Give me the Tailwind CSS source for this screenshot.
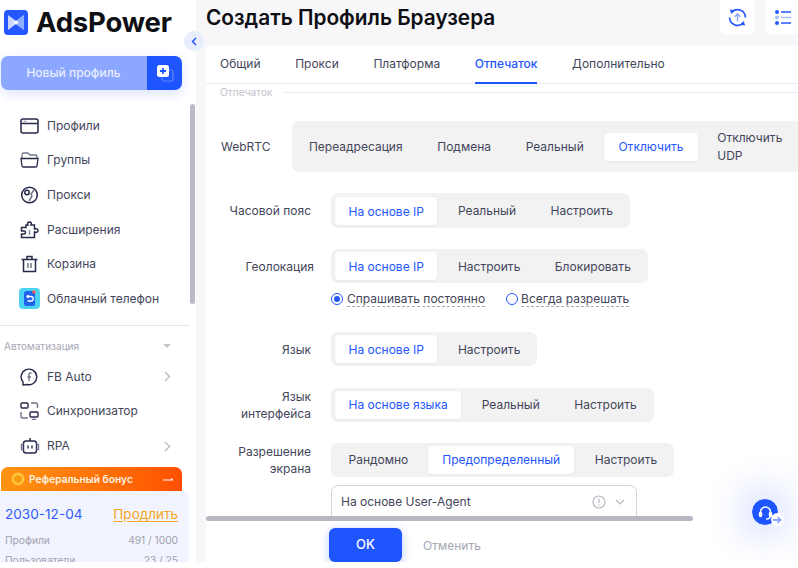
<!DOCTYPE html>
<html lang="ru">
<head>
  <meta charset="UTF-8" />
  <title>AdsPower</title>
  <script src="https://cdn.jsdelivr.net/npm/@tailwindcss/browser@4"></script>
</head>
<body class="bg-white [font-family:Inter,sans-serif] text-[12px] text-[#43465a] overflow-hidden">
<div class="relative flex w-[798px] h-[562px] overflow-hidden bg-[#f7f7f9]">

  <!-- Sidebar -->
  <aside class="relative w-[196px] h-full bg-white shrink-0 flex flex-col overflow-hidden">
    <div class="flex pl-[4px] pt-[10px] h-[46px] shrink-0 items-start">
      <svg class="w-[24px] h-[25px] shrink-0" viewBox="0 0 24 25">
        <rect width="24" height="25" rx="4" fill="#2457ff"/>
        <path d="M4 5l8 6 8-6v15l-8-6-8 6z" fill="#c9d7ff"/>
        <path d="M12 11l8-6v15l-8-6z" fill="#8fadff"/>
        <path d="M9 12.500l3-2 3 2-3 2z" fill="#fff"/>
      </svg>
      <span class="ml-[8px] mt-[-1px] text-[27.500px] leading-[27px] font-bold text-[#0e0f14] tracking-[-0.2px]">AdsPower</span>
    </div>

    <div class="ml-[1px] mt-[10px] w-[181px] h-[34px] flex rounded-[7px] overflow-hidden shrink-0 shadow-[0_4px_12px_rgba(60,100,255,0.18)]">
      <div class="flex-1 bg-[#8ca7ff] text-[#e9eeff] flex items-center justify-center font-medium pr-[1px]">Новый профиль</div>
      <div class="w-[35px] bg-[#1f55ff] flex items-center justify-center">
        <svg class="w-[18px] h-[18px]" viewBox="0 0 18 18">
          <rect x="6" y="6" width="11" height="11" rx="2" fill="none" stroke="#5f86ff" stroke-width="1.200"/>
          <rect x="1" y="1" width="12" height="12" rx="2.500" fill="#fff"/>
          <path d="M7 4v6M4 7h6" stroke="#1f55ff" stroke-width="1.800"/>
        </svg>
      </div>
    </div>

    <nav class="mt-[18.500px] flex flex-col shrink-0">
      <div class="h-[34.600px] pl-[20px] flex items-center">
        <svg class="w-[19px] h-[16px] mr-[8px]" viewBox="0 0 19 16" fill="none" stroke="#262a4a" stroke-width="1.500"><rect x="1" y="1" width="17" height="14" rx="2"/><path d="M1 5.500h17"/><path d="M3.500 3.300h3" stroke="#8b8da0" stroke-width="1"/></svg>
        Профили
      </div>
      <div class="h-[34.600px] pl-[20px] flex items-center">
        <svg class="w-[19px] h-[16px] mr-[8px]" viewBox="0 0 19 16" fill="none" stroke="#262a4a" stroke-width="1.300"><path d="M2 6V2.500C2 1.700 2.600 1 3.500 1H8l2 2h5.500C16.300 3 17 3.700 17 4.500V6" stroke="#71748a"/><path d="M1 6.500h17l-1 7.500c-.1.600-.6 1-1.200 1H3.200c-.6 0-1.100-.4-1.200-1z"/></svg>
        Группы
      </div>
      <div class="h-[34.600px] pl-[20px] flex items-center">
        <svg class="w-[19px] h-[18px] mr-[8px]" viewBox="0 0 19 18" fill="none" stroke="#262a4a" stroke-width="1.500"><circle cx="9.500" cy="9" r="7.800"/><circle cx="7" cy="6.500" r="2.200"/><path d="M14 4l-3 4 1 2-3 5" stroke="#71748a"/></svg>
        Прокси
      </div>
      <div class="h-[34.600px] pl-[20px] flex items-center">
        <svg class="w-[19px] h-[18px] mr-[8px]" viewBox="0 0 19 18" fill="none" stroke="#262a4a" stroke-width="1.500"><path d="M6 4h2c-1-2 0-3 1.500-3S12 2 11 4h3.500v4c2-.8 3.500 0 3.500 1.500S16.500 12 14.500 11v5.500H1.500V13H4c1 0 1.500-.8 1.500-1.500S5 10 4 10H1.500V6.500H6z"/><path d="M9.500 9v5" stroke="#8b8da0"/></svg>
        Расширения
      </div>
      <div class="h-[34.600px] pl-[20px] flex items-center">
        <svg class="w-[19px] h-[18px] mr-[8px]" viewBox="0 0 19 18" fill="none" stroke="#262a4a" stroke-width="1.500"><path d="M1.500 4.500h16M7 4.500V1.500h5v3M3.500 4.500V16.500h12V4.500"/><path d="M8 8v5M11 8v5" stroke="#71748a"/></svg>
        Корзина
      </div>
      <div class="h-[34.600px] pl-[19px] flex items-center">
        <svg class="w-[21px] h-[21px] mr-[7px]" viewBox="0 0 21 21"><rect width="21" height="21" rx="4" fill="#4cd3f2"/><rect x="5" y="3" width="11" height="15" rx="2.500" fill="#1f62ee"/><circle cx="15" cy="4" r="1.800" fill="#f0624d"/><path d="M8 8.500h4a2 2 0 0 1 0 4.500H8.500M9.500 7L8 8.500 9.500 10" fill="none" stroke="#fff" stroke-width="1.300"/></svg>
        Облачный телефон
      </div>
    </nav>

    <div class="mt-[8.500px] w-[190px] border-t border-[#e6e7ec] shrink-0"></div>
    <div class="mt-[14px] pl-[4px] pr-[25px] flex items-center justify-between text-[10px] leading-[13px] text-[#a6a8b5] shrink-0">
      Автоматизация
      <span class="w-0 h-0 border-x-[4px] border-x-transparent border-t-[4px] border-t-[#c3c4cc]"></span>
    </div>

    <div class="mt-[7px] flex flex-col shrink-0">
      <div class="h-[34.600px] pl-[20px] pr-[25px] flex items-center">
        <svg class="w-[19px] h-[18px] mr-[8px]" viewBox="0 0 19 18" fill="none" stroke="#262a4a" stroke-width="1.400"><path d="M3 14A7.800 7.800 0 1 1 7 16.500L3 17z"/><path d="M11.500 5h-1c-1 0-1.500.6-1.500 1.500V13M7.500 9H11" stroke="#71748a"/></svg>
        <span class="flex-1">FB Auto</span>
        <svg class="w-[7px] h-[11px]" viewBox="0 0 7 11" fill="none" stroke="#b9bac3" stroke-width="1.400"><path d="M1 1l4.500 4.500L1 10"/></svg>
      </div>
      <div class="h-[34.600px] pl-[20px] flex items-center">
        <svg class="w-[19px] h-[18px] mr-[8px]" viewBox="0 0 19 18" fill="none" stroke="#262a4a" stroke-width="1.400"><rect x="1" y="1" width="7" height="5" rx="1"/><rect x="10" y="10" width="8" height="5" rx="1"/><path d="M11 1h5a1.500 1.500 0 0 1 1.500 1.500V6M8 16H2.500A1.500 1.500 0 0 1 1 14.500V10M12 17.500h4" stroke="#71748a"/></svg>
        Синхронизатор
      </div>
      <div class="h-[34.600px] pl-[20px] pr-[25px] flex items-center">
        <svg class="w-[20px] h-[18px] mr-[7px]" viewBox="0 0 20 18" fill="none" stroke="#262a4a" stroke-width="1.400"><rect x="3.500" y="4" width="13" height="12" rx="2.500"/><path d="M10 1v3M8 8.500v3M12 8.500v3"/><path d="M3.500 7.500H1.500v5h2M16.500 7.500h2v5h-2" stroke="#71748a"/></svg>
        <span class="flex-1">RPA</span>
        <svg class="w-[7px] h-[11px]" viewBox="0 0 7 11" fill="none" stroke="#b9bac3" stroke-width="1.400"><path d="M1 1l4.500 4.500L1 10"/></svg>
      </div>
    </div>

    <div class="mt-[4px] ml-[1px] w-[181px] h-[24px] rounded-t-[7px] bg-gradient-to-r from-[#ff9411] to-[#ff4f00] flex items-center pl-[10px] pr-[9px] shrink-0">
      <svg class="w-[14px] h-[14px] mr-[4px]" viewBox="0 0 14 14"><circle cx="7" cy="7" r="6.500" fill="#ffc53d"/><circle cx="7" cy="7" r="3.800" fill="#f79a0e"/></svg>
      <span class="flex-1 text-[10.200px] font-semibold text-[#fff3e3]">Реферальный бонус</span>
      <svg class="w-[10px] h-[5px]" viewBox="0 0 10 5"><path d="M0 3.500h10V2.500L8 1v1.500H0z" fill="#fff"/></svg>
    </div>
    <div class="w-[189px] flex-1 bg-[#f1f4fe] rounded-tr-[7px] pl-[5px] pr-[11px] shrink-0">
      <div class="mt-[14px] flex justify-between items-center h-[18px]">
        <span class="text-[13.600px] text-[#2f5bff]">2030-12-04</span>
        <span class="text-[13.500px] text-[#f5a623] underline underline-offset-2">Продлить</span>
      </div>
      <div class="mt-[8px] flex justify-between text-[10.200px] leading-[19px] text-[#a0a2ae]"><span>Профили</span><span>491 / 1000</span></div>
      <div class="flex justify-between text-[10.200px] leading-[20px] text-[#a0a2ae]"><span>Пользователи</span><span>23 / 25</span></div>
    </div>

    <div class="absolute left-[190px] top-[104px] w-[5px] h-[200px] rounded-full bg-[#b9bbc6]"></div>
  </aside>

  <!-- Collapse button -->
  <div class="absolute left-[184px] top-[31px] w-[20px] h-[20px] rounded-full bg-[#e9eeff] flex items-center justify-center">
    <svg class="w-[6px] h-[9px]" viewBox="0 0 6 9" fill="none" stroke="#2457ff" stroke-width="1.500"><path d="M5 1L1.500 4.500 5 8"/></svg>
  </div>

  <!-- Main -->
  <main class="ml-[10px] flex-1 min-w-0 flex flex-col">
    <header class="h-[45px] shrink-0 flex justify-between items-start">
      <h1 class="mt-[5px] text-[20.800px] leading-[26px] font-semibold text-[#0e0f14]">Создать Профиль Браузера</h1>
      <div class="flex gap-[10px] -mr-[2px]">
        <div class="w-[35px] h-[35px] bg-white rounded-b-[7px] flex items-center justify-center">
          <svg class="w-[19px] h-[19px]" viewBox="0 0 19 19" fill="none" stroke="#2457ff" stroke-width="1.700">
            <path d="M17.400 9.500A7.900 7.900 0 0 0 4.200 3.700"/>
            <path d="M1.600 9.500A7.900 7.900 0 0 0 14.800 15.300"/>
            <path d="M1.800 1.600l5.200.6-3.600 3.800z" fill="#2457ff" stroke="none"/>
            <path d="M17.200 17.400l-5.200-.6 3.600-3.800z" fill="#2457ff" stroke="none"/>
            <path d="M9.500 13.500V6M6.700 8.700l2.800-2.800 2.800 2.800" stroke="#8ca7ff" stroke-width="1.500"/>
          </svg>
        </div>
        <div class="w-[35px] h-[35px] bg-white rounded-b-[7px] flex items-center justify-center">
          <svg class="w-[16px] h-[15px]" viewBox="0 0 16 15"><circle cx="2" cy="2" r="2" fill="#2457ff"/><circle cx="2" cy="7.500" r="2" fill="#a9bdff"/><circle cx="2" cy="13" r="2" fill="#2457ff"/><path d="M6 2h10M6 13h10" stroke="#2457ff" stroke-width="1.500"/><path d="M6 7.500h10" stroke="#a9bdff" stroke-width="1.500"/></svg>
        </div>
      </div>
    </header>

    <section class="flex-1 min-h-0 bg-white rounded-tl-[7px] flex flex-col overflow-hidden">
      <div class="h-[39px] shrink-0 flex border-b border-[#eaebef] pl-[14px] gap-[34.600px] leading-[38px]">
        <span>Общий</span>
        <span>Прокси</span>
        <span>Платформа</span>
        <span class="relative text-[#2457ff] font-medium">Отпечаток<span class="absolute left-0 right-0 bottom-[-1px] h-[2px] bg-[#1f55ff]"></span></span>
        <span>Дополнительно</span>
      </div>

      <div class="relative flex-1 min-h-0 overflow-hidden">
        <div class="mt-[1px] pl-[14px] flex items-center text-[10.200px] leading-[14px] text-[#c2c4cc]">
          <span>Отпечаток</span>
          <span class="ml-[11px] flex-1 border-t border-[#e9eaee]"></span>
        </div>

        <!-- WebRTC -->
        <div class="mt-[22px] flex items-center">
          <span class="ml-[15px] w-[50px] text-right">WebRTC</span>
          <div class="ml-[21.500px] w-[510px] h-[51px] rounded-[7px] bg-[#f2f2f3] flex items-center pl-[3px] gap-[6.700px] shrink-0">
            <span class="px-[14px]">Переадресация</span>
            <span class="px-[14px]">Подмена</span>
            <span class="px-[14px]">Реальный</span>
            <span class="h-[28px] px-[14px] leading-[28px] bg-white text-[#2457ff] rounded-[4px] shadow-[0_1px_3px_rgba(0,0,0,0.05)]">Отключить</span>
            <span class="pl-[13px] leading-[18px] w-[90px]">Отключить UDP</span>
          </div>
        </div>

        <!-- Часовой пояс -->
        <div class="mt-[21px] flex items-center">
          <span class="w-[105px] text-right pt-[1px]">Часовой пояс</span>
          <div class="ml-[20px] h-[35px] rounded-[7px] bg-[#f2f2f3] flex items-center pl-[4px] pr-[3px] gap-[6.500px]">
            <span class="h-[28px] px-[13.500px] leading-[29px] bg-white text-[#2457ff] rounded-[4px] shadow-[0_1px_3px_rgba(0,0,0,0.05)]">На основе IP</span>
            <span class="px-[14px] pt-[1px]">Реальный</span>
            <span class="px-[14px] pt-[1px]">Настроить</span>
          </div>
        </div>

        <!-- Геолокация -->
        <div class="mt-[21px] flex items-center">
          <span class="w-[108px] text-right pt-[1px]">Геолокация</span>
          <div class="ml-[17px] h-[34px] rounded-[7px] bg-[#f2f2f3] flex items-center pl-[4px] pr-[3px] gap-[6.500px]">
            <span class="h-[28px] px-[13.500px] leading-[29px] bg-white text-[#2457ff] rounded-[4px] shadow-[0_1px_3px_rgba(0,0,0,0.05)]">На основе IP</span>
            <span class="px-[14px] pt-[1px]">Настроить</span>
            <span class="px-[14px] pt-[1px]">Блокировать</span>
          </div>
        </div>
        <div class="mt-[8px] ml-[125px] h-[16px] flex items-center">
          <span class="w-[12px] h-[12px] rounded-full border-[1.500px] border-[#2457ff] flex items-center justify-center"><span class="w-[6px] h-[6px] rounded-full bg-[#2457ff]"></span></span>
          <span class="ml-[4px] leading-[15px] border-b border-dashed border-[#a6a8b5]">Спрашивать постоянно</span>
          <span class="ml-[21px] w-[12px] h-[12px] rounded-full border-[1.500px] border-[#2457ff]"></span>
          <span class="ml-[3px] leading-[15px] border-b border-dashed border-[#a6a8b5]">Всегда разрешать</span>
        </div>

        <!-- Язык -->
        <div class="mt-[25px] flex items-center">
          <span class="w-[105px] text-right pt-[1px]">Язык</span>
          <div class="ml-[20px] h-[34px] rounded-[7px] bg-[#f2f2f3] flex items-center pl-[4px] pr-[3px] gap-[6.500px]">
            <span class="h-[28px] px-[13.500px] leading-[29px] bg-white text-[#2457ff] rounded-[4px] shadow-[0_1px_3px_rgba(0,0,0,0.05)]">На основе IP</span>
            <span class="px-[14px] pt-[1px]">Настроить</span>
          </div>
        </div>

        <!-- Язык интерфейса -->
        <div class="mt-[22px] flex items-center">
          <span class="w-[105px] text-right leading-[17px]">Язык<br>интерфейса</span>
          <div class="ml-[20px] h-[34px] rounded-[7px] bg-[#f2f2f3] flex items-center pl-[4px] pr-[3px] gap-[6.500px]">
            <span class="h-[28px] px-[13.500px] leading-[28px] bg-white text-[#2457ff] rounded-[4px] shadow-[0_1px_3px_rgba(0,0,0,0.05)]">На основе языка</span>
            <span class="px-[14px]">Реальный</span>
            <span class="px-[14px]">Настроить</span>
          </div>
        </div>

        <!-- Разрешение экрана -->
        <div class="mt-[21px] flex items-center">
          <span class="w-[105px] text-right leading-[17px]">Разрешение<br>экрана</span>
          <div class="ml-[20px] h-[34px] rounded-[7px] bg-[#f2f2f3] flex items-center pl-[4px] pr-[3px] gap-[6.500px]">
            <span class="px-[13.500px]">Рандомно</span>
            <span class="h-[28px] px-[14px] leading-[28px] bg-white text-[#2457ff] rounded-[4px] shadow-[0_1px_3px_rgba(0,0,0,0.05)]">Предопределенный</span>
            <span class="px-[14px]">Настроить</span>
          </div>
        </div>
        <div class="mt-[8px] ml-[125px] w-[306px] h-[40px] border border-[#d4d5db] rounded-[7px] pl-[9px] pr-[11px] flex items-center justify-between pb-[7px]">
          <span>На основе User-Agent</span>
          <span class="flex items-center gap-[9px]">
            <svg class="w-[14px] h-[14px]" viewBox="0 0 14 14" fill="none" stroke="#b9bac3" stroke-width="1.200"><circle cx="7" cy="7" r="6"/><path d="M7 3.500v4.500M7 9.500v1.200"/></svg>
            <svg class="w-[10px] h-[6px]" viewBox="0 0 10 6" fill="none" stroke="#b9bac3" stroke-width="1.200"><path d="M1 1l4 4 4-4"/></svg>
          </span>
        </div>

        <!-- Horizontal scrollbar -->
        <div class="absolute left-0 bottom-0 w-[487px] h-[5px] rounded-full bg-[#b5b7c2]"></div>
      </div>

      <footer class="h-[41px] shrink-0 pl-[123px] pt-[7px] flex items-start">
        <button class="w-[73px] h-[34px] rounded-[6px] bg-[#1f55ff] text-white text-[13px] font-medium shadow-[0_2px_8px_rgba(31,85,255,0.3)]">OK</button>
        <span class="ml-[21px] mt-[9px] text-[#a6a8b5]">Отменить</span>
      </footer>
    </section>
  </main>

  <!-- Support button -->
  <div class="absolute left-[751px] top-[498px] w-[28px] h-[28px] rounded-full bg-[#1f55ff] border border-white shadow-[0_0_36px_10px_rgba(60,100,255,0.22)] flex items-center justify-center">
    <svg class="w-[15px] h-[15px]" viewBox="0 0 15 15" fill="none" stroke="#fff" stroke-width="1.500"><path d="M2.500 9V7a5 5 0 0 1 10 0v2"/><rect x="1.500" y="7.500" width="2" height="4" rx="1" fill="#fff"/><rect x="11.500" y="7.500" width="2" height="4" rx="1" fill="#fff"/><path d="M12 11.500c0 1.500-2 2.500-4 2.500"/></svg>
  </div>
  <div class="absolute left-[771px] top-[513px] w-[13px] h-[13px] rounded-full bg-white flex items-center justify-center">
    <svg class="w-[9px] h-[8px]" viewBox="0 0 9 8" fill="#8ca7ff"><path d="M0 3h4.500V0L9 4 4.500 8V5H0z"/></svg>
  </div>
</div>
</body>
</html>
